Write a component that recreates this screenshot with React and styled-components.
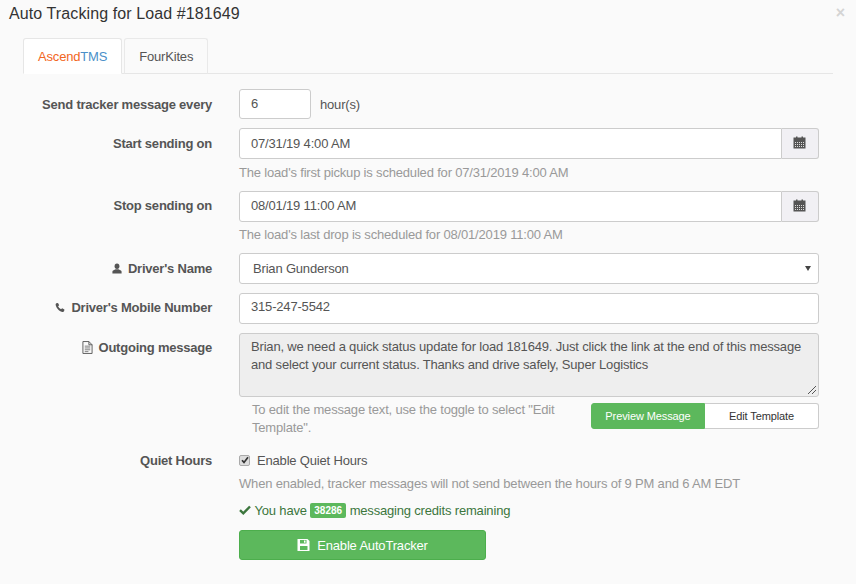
import React from 'react'
import styled, { createGlobalStyle } from 'styled-components'

const Global = createGlobalStyle`
  html, body { margin: 0; padding: 0; background: #fafafa; }
  body {
    font-family: "Liberation Sans", Arial, sans-serif;
    font-size: 13px;
    letter-spacing: -0.18px;
    color: #555;
  }
  * { box-sizing: border-box; }
`

const Modal = styled.div`
  width: 856px;
  height: 584px;
  overflow: hidden;
  padding: 0 23px 0 0;
`
const Header = styled.div`
  display: flex;
  justify-content: space-between;
  padding: 4px 0 0 9px;
  height: 38px;
  margin-right: -23px;
`
const Title = styled.h4`
  margin: 0;
  font-size: 16px;
  font-weight: 400;
  letter-spacing: 0.1px;
  line-height: 20px;
  color: #333;
`
const Close = styled.span`
  font-size: 16px;
  font-weight: 700;
  line-height: 18px;
  color: #d4d4d4;
  padding-right: 11px;
`
const Tabs = styled.div`
  display: flex;
  gap: 2px;
  height: 36px;
  margin-left: 23px;
  border-bottom: 1px solid #e6e6e6;
`
const Tab = styled.div`
  height: 36px;
  padding: 9px 14px 0;
  line-height: 18px;
  border: 1px solid ${p => (p.$active ? '#e6e6e6' : '#e9e9e9')};
  border-bottom: ${p => (p.$active ? '1px solid #fff' : '1px solid #e6e6e6')};
  border-radius: 3px 3px 0 0;
  background: ${p => (p.$active ? '#fff' : 'transparent')};
`
const Orange = styled.span`color: #f26522;`
const Blue = styled.span`color: #4a90c9;`
const Form = styled.div`
  padding-top: 15px;
`
const Row = styled.div`
  display: grid;
  grid-template-columns: 212px 580px;
  column-gap: 27px;
  margin-bottom: ${p => p.$mb ?? 9}px;
`
const Label = styled.label`
  display: flex;
  justify-content: flex-end;
  align-items: center;
  gap: 6px;
  height: ${p => p.$h ?? 30}px;
  font-weight: 700;
  letter-spacing: -0.22px;
  color: #555;
  svg { flex: none; }
`
const Inline = styled.div`
  display: flex;
  align-items: center;
  gap: 9px;
`
const Input = styled.div`
  height: ${p => p.$h ?? 31}px;
  width: ${p => p.$w ?? '100%'};
  flex: ${p => (p.$grow ? 1 : 'none')};
  padding: 0 11px;
  line-height: ${p => p.$lh ?? (p.$h ?? 31) - 2}px;
  background: #fff;
  border: 1px solid #ccc;
  border-radius: ${p => (p.$grow ? '3px 0 0 3px' : '3px')};
  color: #555;
`
const Group = styled.div`
  display: flex;
`
const Addon = styled.div`
  width: 37px;
  height: 31px;
  padding: 0 2px 2px 0;
  display: flex;
  align-items: center;
  justify-content: center;
  background: #f1f0f4;
  border: 1px solid #ccc;
  border-left: 0;
  border-radius: 0 3px 3px 0;
`
const Help = styled.div`
  color: #999;
  line-height: 18px;
  margin-top: ${p => p.$mt ?? 4}px;
`
const Select = styled(Input)`
  position: relative;
  padding-left: 13px;
  &::after {
    content: '';
    position: absolute;
    right: 7px;
    top: 12px;
    border: 3px solid transparent;
    border-top: 5px solid #444;
    border-bottom: 0;
  }
`
const TextArea = styled.div`
  position: relative;
  height: 64px;
  padding: 4px 11px;
  line-height: 18px;
  background: #eee;
  border: 1px solid #ccc;
  border-radius: 3px;
  color: #555;
`
const Grip = styled.svg`
  position: absolute;
  right: 1px;
  bottom: 1px;
`
const EditRow = styled.div`
  display: flex;
  justify-content: space-between;
  padding-left: 13px;
  margin-top: 6px;
`
const EditNote = styled.div`
  width: 330px;
  color: #999;
  line-height: 18px;
  margin-top: -2px;
`
const Toggle = styled.div`
  display: flex;
  height: 26px;
`
const ToggleBtn = styled.div`
  width: ${p => p.$w}px;
  display: flex;
  align-items: center;
  justify-content: center;
  font-size: 11px;
  letter-spacing: -0.1px;
  color: ${p => (p.$on ? '#fff' : '#333')};
  background: ${p => (p.$on ? '#5cb85c' : '#fff')};
  border: 1px solid ${p => (p.$on ? '#5cb85c' : '#ccc')};
  border-left-width: ${p => (p.$on ? 1 : 0)}px;
  border-radius: ${p => (p.$on ? '3px 0 0 3px' : '0 3px 3px 0')};
`
const CheckLine = styled.div`
  display: flex;
  align-items: center;
  gap: 7px;
  height: 18px;
`
const Box = styled.span`
  width: 11px;
  height: 11px;
  display: flex;
  align-items: center;
  justify-content: center;
  background: #ddd;
  border: 1px solid #aaa;
  border-radius: 2px;
`
const Credits = styled.div`
  display: flex;
  align-items: center;
  height: 18px;
  margin-top: 8px;
  color: #3c763d;
  gap: 3.5px;
`
const Badge = styled.span`
  padding: 0 4px;
  height: 15px;
  line-height: 15px;
  background: #5cb85c;
  color: #fff;
  border-radius: 2px;
  font-size: 10px;
  letter-spacing: 0;
  font-weight: 700;
`
const Primary = styled.div`
  width: 247px;
  height: 30px;
  margin-top: 11px;
  display: flex;
  align-items: center;
  justify-content: center;
  gap: 7px;
  background: #5cb85c;
  border: 1px solid #4cae4c;
  border-radius: 3px;
  color: #fff;
`

function CalendarIcon() {
  const cells = []
  for (let y = 6; y <= 10; y += 2) {
    for (let x = 2; x <= 10; x += 2) {
      cells.push(<rect key={`${x}-${y}`} x={x} y={y} width="1" height="1" fill="#ddd" />)
    }
  }
  return (
    <svg width="13" height="13" viewBox="0 0 13 13">
      <path d="M0.5 1.5h2.5V0.5h1.5v1h4v-1H10v1h2.5v11H0.5z" fill="#555" />
      {cells}
    </svg>
  )
}

const UserIcon = () => (
  <svg width="10" height="11" viewBox="0 0 12 12">
    <ellipse cx="6" cy="3.3" rx="2.9" ry="3.3" fill="#555" />
    <path d="M0.5 12V9.6C0.5 8 3 7.6 4.2 6.8h3.6C9 7.6 11.5 8 11.5 9.6V12z" fill="#555" />
  </svg>
)

const PhoneIcon = () => (
  <svg width="10" height="11" viewBox="0 0 12 12">
    <path d="M1.5 0.8L3.6 0.5 5 3.2 3.7 4.6C4.3 6 5.6 7.4 7.2 8L8.6 6.9 11.3 8.4 11 10.2C10.6 11.2 9.6 11.6 8.6 11.3 4.8 10.3 1.5 6.6 0.8 3 0.6 2.2 0.9 1.3 1.5 0.8z" fill="#555" />
  </svg>
)

const FileIcon = () => (
  <svg width="11" height="13" viewBox="0 0 12 14">
    <path d="M1 0.5h6.5l3.5 3.5v9.5H1z M7.5 0.5V4H11" fill="none" stroke="#555" />
    <path d="M3 5.5h6M3 7.5h6M3 9.5h6M3 11.5h4" fill="none" stroke="#777" />
  </svg>
)

const SaveIcon = () => (
  <svg width="13" height="12" viewBox="0 0 13 12">
    <path fillRule="evenodd" d="M0.5 0h10l2 2v10H0.5z M3 1v3.5h6.5V1z M3 7v4h7.5V7z" fill="#fff" />
    <rect x="7" y="1.5" width="1.5" height="2.2" fill="#fff" />
  </svg>
)

const CheckIcon = () => (
  <svg width="12" height="10" viewBox="0 0 12 10">
    <path d="M1 5.2L4.3 8.3 11 1.5" fill="none" stroke="#3c763d" strokeWidth="2.4" />
  </svg>
)

const BoxCheck = () => (
  <svg width="8" height="8" viewBox="0 0 8 8">
    <path d="M1 4.2L3 6.4 7 1.2" fill="none" stroke="#333" strokeWidth="1.7" />
  </svg>
)

export default function App() {
  return (
    <Modal>
      <Global />
      <Header>
        <Title>Auto Tracking for Load #181649</Title>
        <Close>×</Close>
      </Header>
      <Tabs>
        <Tab $active><Orange>Ascend</Orange><Blue>TMS</Blue></Tab>
        <Tab>FourKites</Tab>
      </Tabs>
      <Form>
        <Row>
          <Label>Send tracker message every</Label>
          <Inline>
            <Input $w="72px" $h={30}>6</Input>
            <span>hour(s)</span>
          </Inline>
        </Row>
        <Row>
          <Label>Start sending on</Label>
          <div>
            <Group>
              <Input $grow>07/31/19 4:00 AM</Input>
              <Addon><CalendarIcon /></Addon>
            </Group>
            <Help $mt={5}>The load's first pickup is scheduled for 07/31/2019 4:00 AM</Help>
          </div>
        </Row>
        <Row>
          <Label $h={28}>Stop sending on</Label>
          <div>
            <Group>
              <Input $grow $lh={27}>08/01/19 11:00 AM</Input>
              <Addon><CalendarIcon /></Addon>
            </Group>
            <Help>The load's last drop is scheduled for 08/01/2019 11:00 AM</Help>
          </div>
        </Row>
        <Row>
          <Label><UserIcon />Driver's Name</Label>
          <Select>Brian Gunderson</Select>
        </Row>
        <Row>
          <Label $h={28}><PhoneIcon />Driver's Mobile Number</Label>
          <Input $lh={25}>315-247-5542</Input>
        </Row>
        <Row $mb={14}>
          <Label $h={28}><FileIcon />Outgoing message</Label>
          <div>
            <TextArea>
              Brian, we need a quick status update for load 181649. Just click the link at the end of this message and select your current status. Thanks and drive safely, Super Logistics
              <Grip width="10" height="10" viewBox="0 0 10 10">
                <path d="M1 9 L9 1 M5 9 L9 5" stroke="#555" strokeWidth="1" fill="none" />
              </Grip>
            </TextArea>
            <EditRow>
              <EditNote>To edit the message text, use the toggle to select "Edit Template".</EditNote>
              <Toggle>
                <ToggleBtn $on $w={114}>Preview Message</ToggleBtn>
                <ToggleBtn $w={114}>Edit Template</ToggleBtn>
              </Toggle>
            </EditRow>
          </div>
        </Row>
        <Row $mb={0}>
          <Label $h={18}>Quiet Hours</Label>
          <div>
            <CheckLine>
              <Box><BoxCheck /></Box>
              Enable Quiet Hours
            </CheckLine>
            <Help $mt={6}>When enabled, tracker messages will not send between the hours of 9 PM and 6 AM EDT</Help>
            <Credits>
              <CheckIcon />
              You have <Badge>38286</Badge> messaging credits remaining
            </Credits>
            <Primary><SaveIcon />Enable AutoTracker</Primary>
          </div>
        </Row>
      </Form>
    </Modal>
  )
}
